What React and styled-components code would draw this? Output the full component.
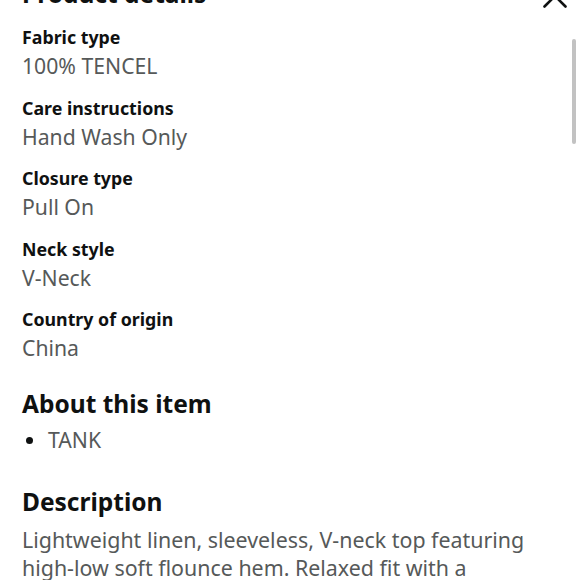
import styled, { createGlobalStyle } from "styled-components"

const Global = createGlobalStyle`
body {
  margin: 0;
  background: #fff;
  font-family: "Noto Sans", "Open Sans", Arial, sans-serif;
  color: #0f1111;
  overflow: hidden;
}
`

const Sheet = styled.div`
position: relative;
width: 580px;
height: 580px;
overflow: hidden;
`

const Content = styled.div`
padding: 0 22px;
margin-top: -22px;
`

const Header = styled.div`
display: flex;
justify-content: space-between;
align-items: center;
height: 32px;
margin-bottom: 15px;
`

const Title = styled.h2`
margin: 0;
font-size: 24.5px;
line-height: 32px;
font-weight: 700;
`

const Close = styled.button`
border: 0;
background: none;
padding: 0;
margin: 4px -11px 0 0;
width: 28px;
height: 28px;
display: flex;
align-items: center;
justify-content: center;
`

const Group = styled.div`
margin-bottom: 14.5px;
`

const Label = styled.div`
font-size: 17.8px;
line-height: 24px;
font-weight: 700;
margin-bottom: 2px;
`

const Value = styled.div`
font-size: 21.2px;
line-height: 30px;
color: #565959;
`

const Section = styled.h3`
margin: ${p => p.top}px 0 0;
font-size: 24.5px;
line-height: 32px;
font-weight: 700;
`

const List = styled.ul`
margin: 5px 0 0;
padding: 0 0 0 26px;
list-style: none;
`

const Item = styled.li`
position: relative;
font-size: 21.2px;
line-height: 30px;
color: #565959;

&::before {
  content: "";
  position: absolute;
  left: -22px;
  top: 12px;
  width: 7px;
  height: 7px;
  border-radius: 50%;
  background: #0f1111;
}
`

const Body = styled.p`
margin: 8px 0 0;
font-size: 21.4px;
line-height: 28px;
color: #565959;
`

const Scrollbar = styled.div`
position: absolute;
right: 4px;
top: 39px;
width: 4px;
height: 105px;
border-radius: 2px;
background: #c2c2c2;
`

const details = [
  ["Fabric type", "100% TENCEL"],
  ["Care instructions", "Hand Wash Only"],
  ["Closure type", "Pull On"],
  ["Neck style", "V-Neck"],
  ["Country of origin", "China"],
]

export default function App() {
  return (
    <Sheet>
      <Global />
      <Content>
        <Header>
          <Title>Product details</Title>
          <Close aria-label="Close">
            <svg width="24" height="24" viewBox="0 0 24 24">
              <path d="M1.5 1.5 L22.5 22.5 M22.5 1.5 L1.5 22.5" stroke="#0f1111" strokeWidth="2.6" strokeLinecap="round" />
            </svg>
          </Close>
        </Header>
        {details.map(([label, value]) => (
          <Group key={label}>
            <Label>{label}</Label>
            <Value>{value}</Value>
          </Group>
        ))}
        <Section top={25}>About this item</Section>
        <List>
          <Item>TANK</Item>
        </List>
        <Section top={31}>Description</Section>
        <Body>
          Lightweight linen, sleeveless, V-neck top featuring high-low soft flounce hem. Relaxed fit with a
        </Body>
      </Content>
      <Scrollbar />
    </Sheet>
  )
}
